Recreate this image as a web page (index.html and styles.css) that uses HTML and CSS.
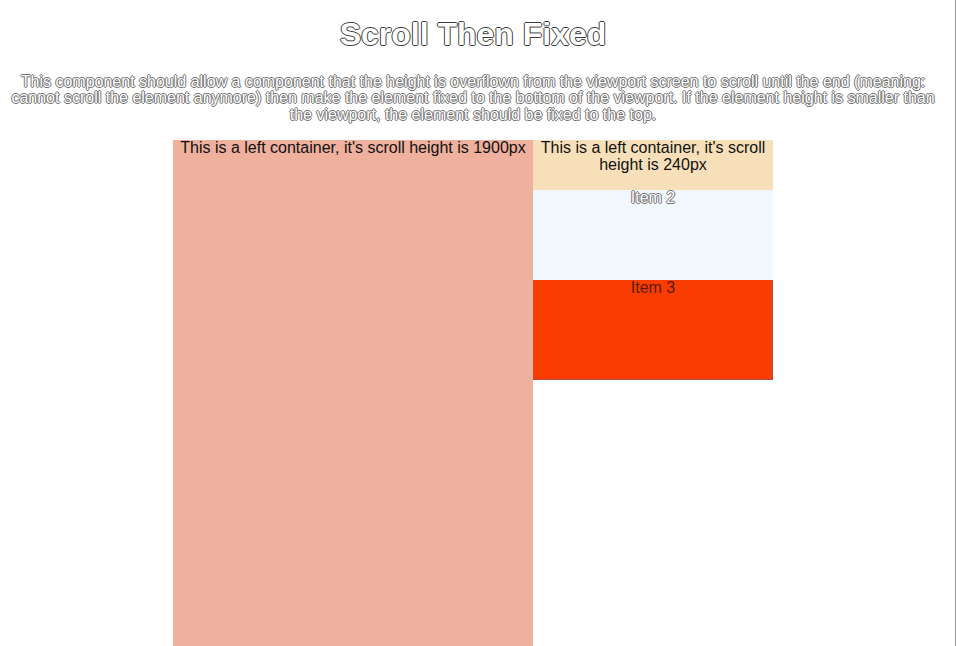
FILE: index.html
```html
<!DOCTYPE html>
<html lang="en">
<head>
<meta charset="utf-8">
<title>Scroll Then Fixed</title>
<link rel="stylesheet" href="styles.css">
</head>
<body>
<div class="page">
  <h1 class="title">Scroll Then Fixed</h1>
  <p class="desc">This component should allow a component that the height is overflown from the viewport screen to scroll until the end (meaning: cannot scroll the element anymore) then make the element fixed to the bottom of the viewport. If the element height is smaller than the viewport, the element should be fixed to the top.</p>
  <div class="columns">
    <div class="left">This is a left container, it's scroll height is 1900px</div>
    <div class="right">
      <div class="item item-1">This is a left container, it's scroll height is 240px</div>
      <div class="item item-2">Item 2</div>
      <div class="item item-3">Item 3</div>
    </div>
  </div>
</div>
</body>
</html>
```
FILE: styles.css
```css
html {
  overflow: hidden;
  height: 100%;
  border-right: 1px solid #9a9a9a;
  background: #fff;
}
body {
  margin: 0;
  height: 100%;
  overflow: hidden;
  font-family: "Liberation Sans", Arial, sans-serif;
  line-height: 1.05;
  color: #111;
}
.page {
  width: 946px;
  text-align: center;
}
.title {
  margin: 18px 0 0;
  font-size: 32px;
  font-weight: bold;
  line-height: 33.6px;
  color: #fff;
  text-shadow: -1px 0 #3c3c3c, 1px 0 #3c3c3c, 0 -1px #3c3c3c, 0 1px #3c3c3c;
}
.desc {
  margin: 22px 8px 0;
  font-size: 16px;
  line-height: 16.5px;
  color: #fff;
  text-shadow: -1px 0 #707070, 1px 0 #707070, 0 -1px #707070, 0 1px #707070;
}
.columns {
  display: flex;
  width: 600px;
  margin: 17px auto 0;
}
.left {
  width: 360px;
  height: 1900px;
  background: #efb09e;
  font-size: 16px;
  line-height: 16.5px;
}
.right {
  width: 240px;
  display: flex;
  flex-direction: column;
}
.item {
  font-size: 16px;
  line-height: 16.5px;
}
.item-1 {
  height: 50px;
  background: #f7e0b9;
  padding: 0 4px;
}
.item-2 {
  height: 90px;
  background: #f1f8fd;
  color: #fff;
  text-shadow: -1px 0 #707070, 1px 0 #707070, 0 -1px #707070, 0 1px #707070;
}
.item-3 {
  box-sizing: border-box;
  height: 100px;
  background: #f93c00;
  border: 1px solid #c04a3a;
  border-top: 0;
  color: #5c1a0c;
}
```
